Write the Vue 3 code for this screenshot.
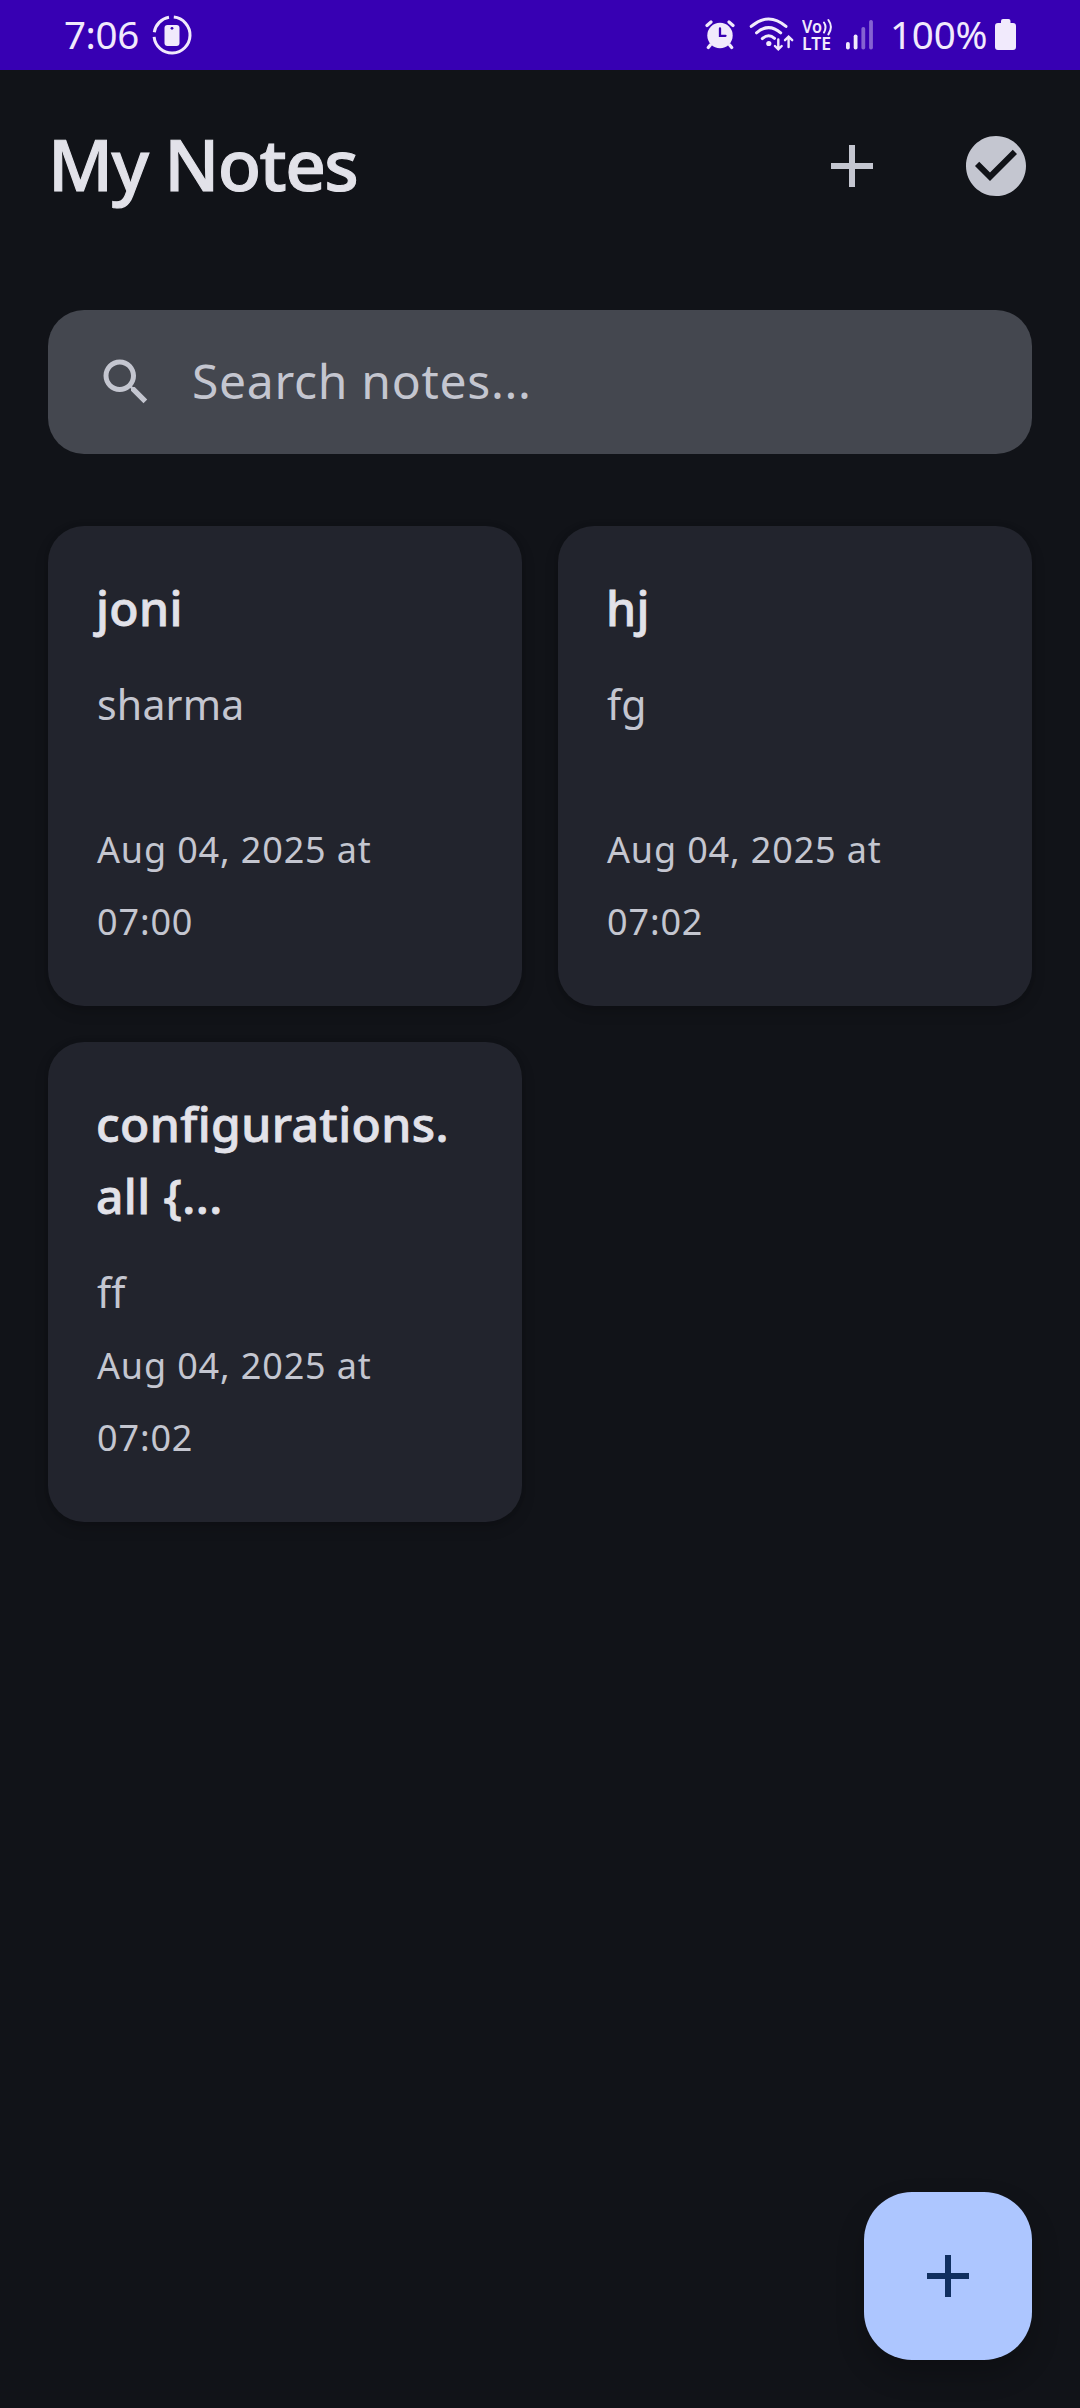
<script setup>
const notes = [
  { title: 'joni', body: 'sharma', date: 'Aug 04, 2025 at', time: '07:00' },
  { title: 'hj', body: 'fg', date: 'Aug 04, 2025 at', time: '07:02' },
  { title: 'configurations.all {...', body: 'ff', date: 'Aug 04, 2025 at', time: '07:02' },
]
</script>

<template>
  <div class="screen">
    <div class="status">
      <div class="left">
        <span class="clock">7:06</span>
        <svg class="ring" width="40" height="40" viewBox="0 0 40 40">
          <g fill="none" stroke="currentColor" stroke-width="3">
            <path d="M21.8 2.1A18 18 0 1 1 2.1 21.8" />
            <path d="M2.3 17.2A18 18 0 0 1 17 2.3" />
          </g>
          <rect x="12.5" y="10" width="15" height="21" rx="3" fill="currentColor" />
          <circle cx="20" cy="13.3" r="1.4" fill="#3700b3" />
        </svg>
      </div>
      <div class="right">
        <svg width="30" height="30" viewBox="0 0 30 30" fill="none" stroke="currentColor" stroke-linecap="round">
          <circle cx="15" cy="15.5" r="12.7" fill="currentColor" stroke="none" />
          <path d="M2 5.5L6 2M28 5.5L24 2M5.3 25L3.3 27.6M24.7 25L26.7 27.6" stroke-width="3.2" />
          <path d="M15 8.5V15.8H20.5" stroke="#3700b3" stroke-width="2.3" />
        </svg>
        <svg class="wifi" width="46" height="36" viewBox="0 0 46 36" fill="none" stroke="currentColor" stroke-width="3" stroke-linecap="round">
          <path d="M2.2 9.4Q19.6 -5.5 37 9.4M7.5 15.8Q19.6 5.5 31.7 15.8M13.3 21.6Q19.6 16 25.5 21.3" />
          <circle cx="19.8" cy="26.5" r="2.6" fill="currentColor" stroke="none" />
          <path d="M29.3 22.5V32M25.9 29L29.3 32.4L32.7 29M39.6 30V20.5M36 23.2L39.6 19.7L43.2 23.2" stroke-width="2.4" />
        </svg>
        <svg class="lte" width="32" height="42" viewBox="0 -4 32 42">
          <g fill="currentColor" font-family="Noto Sans, sans-serif" font-weight="600">
            <text x="0" y="15" font-size="17" textLength="20" lengthAdjust="spacingAndGlyphs">Vo</text>
            <text x="0" y="32" font-size="17" textLength="29" lengthAdjust="spacingAndGlyphs">LTE</text>
          </g>
          <path d="M22 4.5Q25 9 22 14.5M26.4 2Q31.4 9 26.4 16.4" fill="none" stroke="currentColor" stroke-width="2" stroke-linecap="round" />
        </svg>
        <svg class="signal" width="28" height="30" viewBox="0 0 28 30" fill="currentColor">
          <rect x="0" y="22" width="3.8" height="7.5" rx="1.8" />
          <rect x="7.7" y="14.5" width="3.8" height="15" rx="1.8" />
          <rect x="15.4" y="7" width="3.8" height="22.5" rx="1.8" opacity=".42" />
          <rect x="23.1" y="0" width="3.8" height="29.5" rx="1.8" opacity=".42" />
        </svg>
        <span class="percent">100%</span>
        <svg class="battery" width="22" height="32" viewBox="0 0 22 32" fill="currentColor">
          <path d="M6 4V2Q6 0 8 0H13.5Q15.5 0 15.5 2V4H18Q21 4 21 7V28Q21 31 18 31H3Q0 31 0 28V7Q0 4 3 4Z" />
        </svg>
      </div>
    </div>

    <header class="header">
      <h1>My Notes</h1>
      <div class="actions">
        <svg width="72" height="72" viewBox="0 0 24 24" fill="currentColor"><path d="M19 13h-6v6h-2v-6H5v-2h6V5h2v6h6v2z" /></svg>
        <svg width="72" height="72" viewBox="0 0 24 24" fill="currentColor"><path d="M12 2C6.48 2 2 6.48 2 12s4.48 10 10 10 10-4.48 10-10S17.52 2 12 2zm-2 15l-5-5 1.41-1.41L10 14.17l7.59-7.59L19 8l-9 9z" /></svg>
      </div>
    </header>

    <div class="search">
      <svg width="60" height="60" viewBox="0 0 24 24" fill="currentColor"><path d="M15.5 14h-.79l-.28-.27C15.41 12.59 16 11.11 16 9.5 16 5.91 13.09 3 9.5 3S3 5.91 3 9.5 5.91 16 9.5 16c1.61 0 3.09-.59 4.23-1.57l.27.28v.79l5 4.99L20.49 19l-4.99-5zm-6 0C7.01 14 5 11.99 5 9.5S7.01 5 9.5 5 14 7.01 14 9.5 11.99 14 9.5 14z" /></svg>
      <span>Search notes...</span>
    </div>

    <main class="grid">
      <article v-for="(note, i) in notes" :key="i" class="card">
        <h2>{{ note.title }}</h2>
        <p>{{ note.body }}</p>
        <div class="stamp"><span>{{ note.date }}</span><span>{{ note.time }}</span></div>
      </article>
    </main>

    <button class="fab" aria-label="Add note">
      <svg width="72" height="72" viewBox="0 0 24 24" fill="currentColor"><path d="M19 13h-6v6h-2v-6H5v-2h6V5h2v6h6v2z" /></svg>
    </button>
  </div>
</template>

<style>
body { background: #111318; }
</style>

<style scoped>
.screen {
  position: relative;
  width: 1080px;
  height: 2408px;
  overflow: hidden;
  background: #111318;
  color: #c4c6d0;
  font-family: "Noto Sans", "Open Sans", sans-serif;
  font-kerning: normal;
  font-variant-ligatures: none;
}
svg { display: block; flex: none; }
h1, h2, p { margin: 0; }
.status {
  display: flex;
  justify-content: space-between;
  box-sizing: border-box;
  height: 70px;
  padding: 0 63px 0 64px;
  background: #3700b3;
  color: #f1eafc;
  font-size: 38.5px;
  line-height: 68px;
}
.left, .right { display: flex; align-items: flex-start; }
.clock { width: 88px; letter-spacing: -.4px; }
.ring { margin-top: 15px; }
.right > svg { margin-top: 20px; }
.right > .wifi { margin: 17px 0 0 14px; }
.right > .lte { margin: 14px 0 0 7px; }
.right > .signal { margin: 20px 0 0 12px; }
.percent { width: 102px; margin-left: 16px; letter-spacing: -.2px; white-space: nowrap; }
.right > .battery { margin: 19px 0 0 3px; }
.header {
  display: flex;
  align-items: center;
  justify-content: space-between;
  height: 192px;
  padding: 0 48px;
}
h1 {
  margin-top: -4px;
  color: #e2e2e9;
  font-size: 71px;
  font-weight: 500;
  line-height: 96px;
  letter-spacing: -1.6px;
  -webkit-text-stroke: 1.1px currentColor;
}
.actions { display: flex; gap: 72px; }
.search {
  display: flex;
  align-items: center;
  box-sizing: border-box;
  height: 144px;
  margin: 48px 48px 72px;
  padding-left: 48px;
  border-radius: 36px;
  background: #44474f;
  font-size: 48px;
  line-height: 72px;
}
.search span { margin: -3px 0 0 36px; letter-spacing: .7px; }
.grid {
  display: grid;
  grid-template-columns: 474px 474px;
  grid-auto-rows: 480px;
  gap: 36px;
  padding: 0 48px;
}
.card {
  display: flex;
  flex-direction: column;
  box-sizing: border-box;
  padding: 46px 48px 48px;
  border-radius: 36px;
  background: #22242d;
  box-shadow: 0 6px 14px rgba(0, 0, 0, .17), 0 0 5px rgba(0, 0, 0, .1);
  line-height: 72px;
}
h2 {
  margin-bottom: 24px;
  color: #e2e2e9;
  font-size: 48px;
  font-weight: 500;
  letter-spacing: .4px;
  overflow-wrap: anywhere;
  -webkit-text-stroke: .8px currentColor;
}
p { padding-left: 1px; font-size: 41px; letter-spacing: .2px; }
.stamp {
  display: flex;
  flex-direction: column;
  margin-top: auto;
  padding-left: 1px;
  font-size: 36px;
  letter-spacing: .85px;
}
.fab {
  position: absolute;
  right: 48px;
  bottom: 48px;
  display: flex;
  align-items: center;
  justify-content: center;
  width: 168px;
  height: 168px;
  padding: 0;
  border: 0;
  border-radius: 48px;
  background: #adc6ff;
  color: #102f60;
  box-shadow: 0 14px 28px rgba(0, 0, 0, .22);
}
</style>
